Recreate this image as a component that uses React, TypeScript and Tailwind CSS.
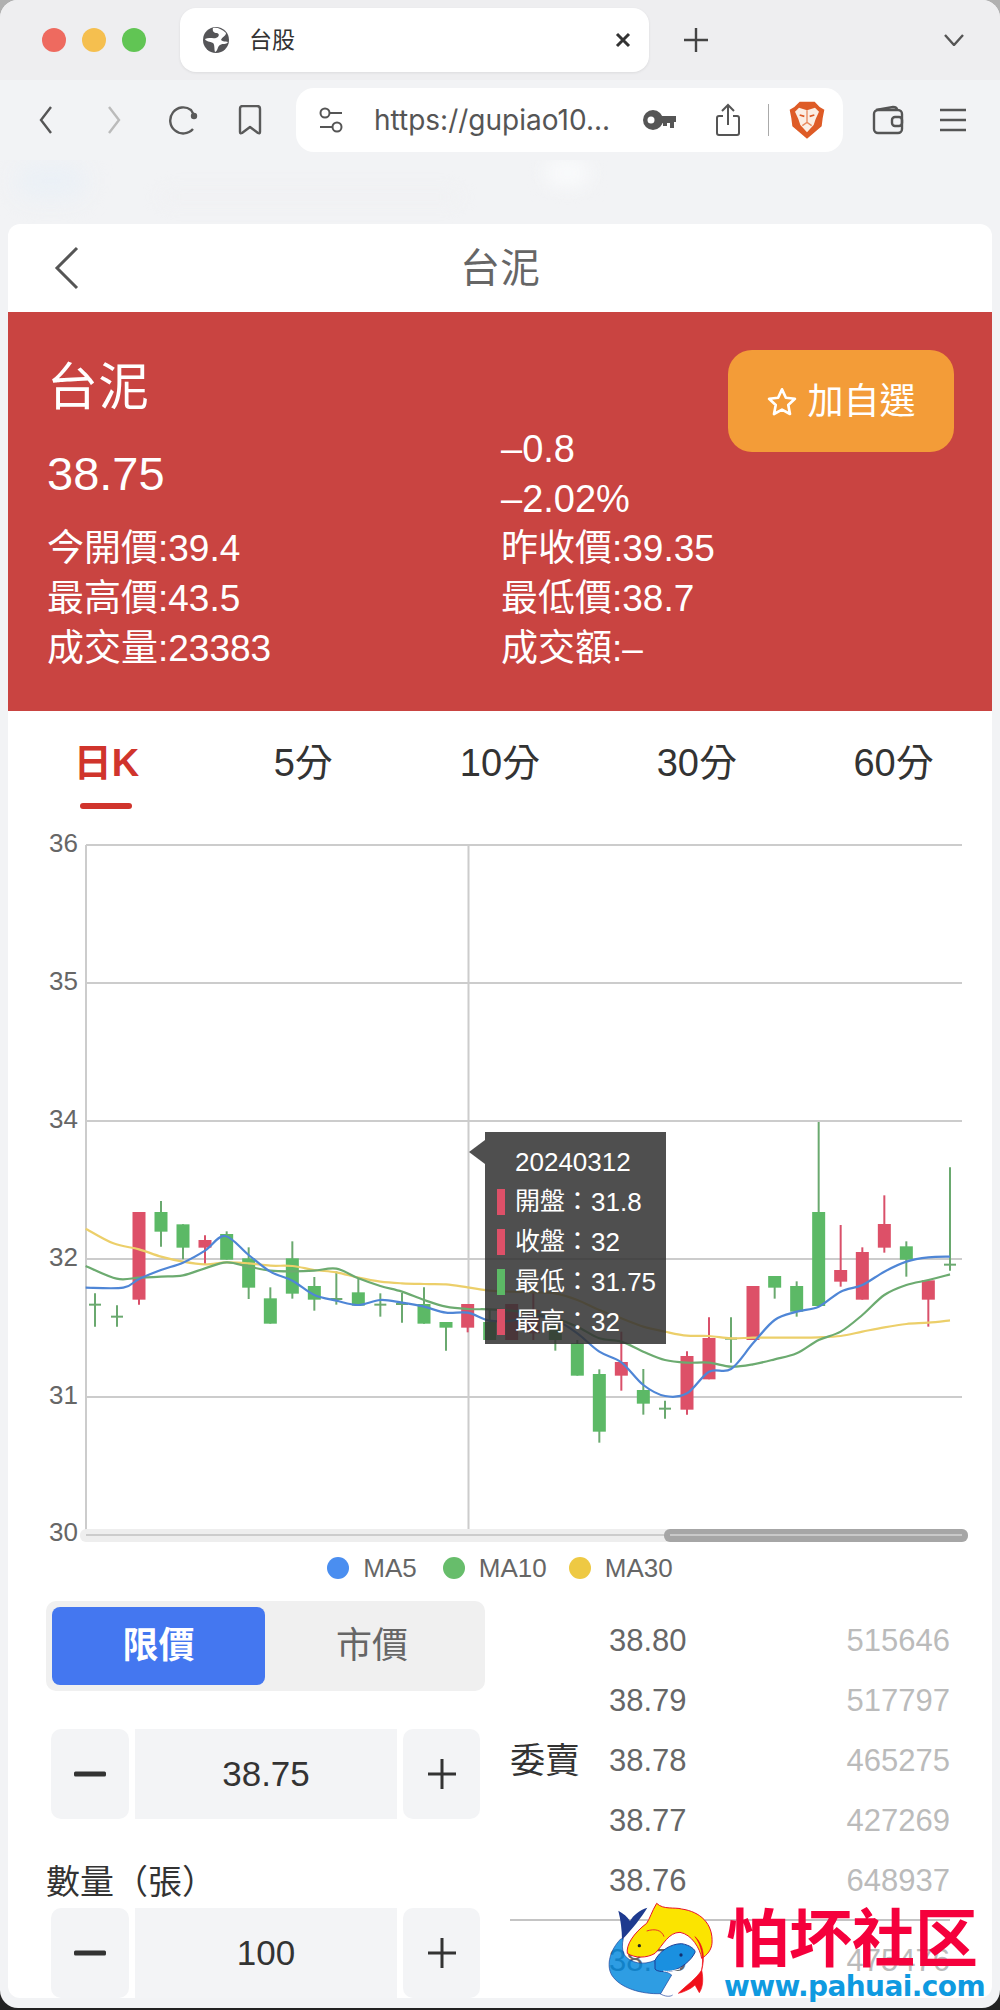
import React from "react";

const FONT = "font-['Liberation_Sans','Noto_Sans_CJK_TC',sans-serif]";

// [x, bodyTop, bodyBottom, wickTop, wickBottom, colour] with y read from a crop: page y = 1130 + v / 3
type C = [number, number, number, number, number, "r" | "g"];
const z3 = (x: number) => 50 + x / 3;
const z4 = (x: number) => 500 + x / 3;
const Y = (v: number) => 1130 + v / 3;

const candles: C[] = [
  [z3(135), 524, 524, 490, 590, "g"],
  [z3(201), 560, 560, 526, 590, "g"],
  [z3(267), 246, 509, 246, 524, "r"],
  [z3(333), 246, 305, 213, 350, "g"],
  [z3(399), 283, 353, 283, 388, "g"],
  [z3(465), 330, 353, 316, 404, "r"],
  [z3(530), 312, 389, 304, 389, "g"],
  [z3(596), 385, 473, 352, 507, "g"],
  [z3(661), 505, 581, 472, 581, "g"],
  [z3(727), 385, 491, 334, 506, "g"],
  [z3(793), 468, 509, 441, 542, "g"],
  [z3(859), 507, 507, 424, 524, "g"],
  [z3(925), 487, 527, 441, 527, "g"],
  [z3(991), 524, 524, 490, 560, "g"],
  [z3(1056), 522, 522, 489, 578, "g"],
  [z3(1122), 522, 581, 472, 581, "g"],
  [z3(1188), 576, 593, 576, 662, "g"],
  [z3(1253), 522, 593, 522, 607, "r"],
  [z3(1319), 576, 630, 540, 630, "g"],
  [z4(35), 522, 630, 522, 630, "r"],
  [z4(100), 540, 610, 488, 630, "r"],
  [z4(166), 585, 630, 570, 662, "g"],
  [z4(232), 640, 737, 630, 737, "g"],
  [z4(298), 732, 905, 718, 938, "g"],
  [z4(364), 696, 737, 605, 782, "r"],
  [z4(430), 780, 821, 717, 854, "g"],
  [z4(495), 836, 836, 812, 866, "g"],
  [z4(561), 678, 839, 664, 854, "r"],
  [z4(627), 624, 748, 562, 748, "r"],
  [z4(693), 626, 626, 562, 698, "g"],
  [z4(759), 468, 630, 468, 630, "r"],
  [z4(824), 438, 473, 438, 506, "g"],
  [z4(890), 468, 545, 454, 560, "g"],
  [z4(956), 246, 528, -24, 528, "g"],
  [z4(1022), 420, 455, 285, 470, "r"],
  [z4(1087), 366, 509, 352, 509, "r"],
  [z4(1153), 282, 353, 196, 368, "r"],
  [z4(1219), 349, 389, 334, 440, "g"],
  [z4(1285), 451, 509, 451, 590, "r"],
  [z4(1350), 404, 404, 112, 422, "g"],
];

const toPts = (a: number[][], b: number[][]) => [
  ...a.map(([x, y]) => [z3(x), Y(y)]),
  ...b.map(([x, y]) => [z4(x), Y(y)]),
];

const ma5 = toPts(
  [[107,473],[220,473],[267,447],[333,420],[399,398],[465,362],[525,318],[596,375],[661,425],[727,452],[793,495],[859,512],[925,525],[991,510],[1056,518],[1122,530],[1188,548],[1253,548],[1319,572]],
  [[35,572],[100,558],[166,570],[232,610],[298,665],[364,697],[430,765],[495,798],[561,790],[627,725],[693,717],[759,640],[824,570],[890,545],[956,530],[1022,485],[1087,465],[1153,425],[1219,395],[1285,382],[1350,380]]
);
const ma10 = toPts(
  [[107,408],[200,446],[267,443],[333,440],[399,436],[465,415],[530,397],[596,410],[661,422],[727,424],[793,422],[859,416],[925,445],[991,468],[1056,485],[1122,510],[1188,530],[1253,537],[1319,538]],
  [[35,542],[100,550],[166,565],[232,590],[298,625],[364,635],[430,665],[495,690],[561,698],[627,698],[693,710],[759,703],[824,688],[890,670],[956,630],[1022,605],[1087,555],[1153,495],[1219,465],[1285,450],[1350,433]]
);
const ma30 = toPts(
  [[107,296],[190,340],[267,358],[333,380],[399,395],[465,403],[530,397],[596,400],[661,407],[727,408],[793,420],[859,427],[925,443],[991,455],[1056,460],[1122,462],[1188,463],[1253,472],[1319,482]],
  [[35,485],[100,487],[166,490],[232,510],[298,540],[364,565],[430,590],[495,605],[561,617],[627,618],[693,625],[759,623],[824,623],[890,623],[956,622],[1022,618],[1087,605],[1153,592],[1219,582],[1285,578],[1350,571]]
);

function smooth(p: number[][]) {
  let d = `M${p[0][0]},${p[0][1]}`;
  for (let i = 0; i < p.length - 1; i++) {
    const a = p[Math.max(i - 1, 0)], b = p[i], c = p[i + 1], e = p[Math.min(i + 2, p.length - 1)];
    d += ` C${b[0] + (c[0] - a[0]) / 6},${b[1] + (c[1] - a[1]) / 6} ${c[0] - (e[0] - b[0]) / 6},${c[1] - (e[1] - b[1]) / 6} ${c[0]},${c[1]}`;
  }
  return d;
}

const gridY = [845, 983, 1121, 1259, 1397, 1534];
const labels = ["36", "35", "34", "32", "31", "30"];

function Chart() {
  return (
    <svg viewBox="8 815 984 733" width={984} height={733} className="block">
      {gridY.map((y, i) => (
        <React.Fragment key={y}>
          <line x1={86} x2={962} y1={y} y2={y} stroke="#cccccc" strokeWidth={2} />
          <text x={78} y={y + 7} textAnchor="end" className="text-[26px] fill-[#666666]">{labels[i]}</text>
        </React.Fragment>
      ))}
      <line x1={86} x2={86} y1={845} y2={1534} stroke="#cccccc" strokeWidth={2} />
      <line x1={468.5} x2={468.5} y1={845} y2={1534} stroke="#cccccc" strokeWidth={2} />
      {candles.map(([x, t, b, wt, wb, c], i) => {
        const fill = c === "r" ? "#dd5068" : "#5cb966";
        const wick = c === "r" ? "#d9506a" : "#6aa96f";
        return (
          <g key={i}>
            <line x1={x} x2={x} y1={Y(wt)} y2={Y(wb)} stroke={wick} strokeWidth={2} />
            {t === b ? (
              <line x1={x - 6} x2={x + 6} y1={Y(t)} y2={Y(t)} stroke={wick} strokeWidth={2} />
            ) : (
              <rect x={x - 6.5} y={Y(t)} width={13} height={(b - t) / 3} fill={fill} />
            )}
          </g>
        );
      })}
      <path d={smooth(ma30)} fill="none" stroke="#eccf6a" strokeWidth={2.2} />
      <path d={smooth(ma10)} fill="none" stroke="#6cab70" strokeWidth={2.2} />
      <path d={smooth(ma5)} fill="none" stroke="#4f86d6" strokeWidth={2.2} />
      <rect x={80} y={1529} width={888} height={13} rx={6} fill="#eeeeee" />
      <line x1={86} x2={664} y1={1535} y2={1535} stroke="#cccccc" strokeWidth={2} />
      <rect x={664} y={1529} width={304} height={13} rx={6} fill="#a6a6a6" />
      <line x1={670} x2={962} y1={1535} y2={1535} stroke="#c9c9c9" strokeWidth={2} />
    </svg>
  );
}

function Tooltip() {
  const rows: [string, string, string][] = [
    ["開盤：", "31.8", "bg-[#dd5068]"],
    ["收盤：", "32", "bg-[#dd5068]"],
    ["最低：", "31.75", "bg-[#5cb966]"],
    ["最高：", "32", "bg-[#dd5068]"],
  ];
  return (
    <div className="absolute left-[477px] top-[317px] w-[181px] h-[212px] bg-[rgba(50,50,50,0.86)] text-white text-[25px] pt-[10px]">
      <div className="absolute left-[-16px] top-[8px] w-0 h-0 border-y-[12px] border-y-transparent border-r-[16px] border-r-[rgba(50,50,50,0.86)]" />
      <div className="h-[40px] pl-[30px] flex items-center text-[26px]">20240312</div>
      {rows.map(([k, v, c]) => (
        <div key={k} className="h-[40px] flex items-center pl-[12px]">
          <span className={`w-[8px] h-[26px] ${c}`} />
          <span className="w-[76px] ml-[10px]">{k}</span>
          <span className="text-[26px]">{v}</span>
        </div>
      ))}
    </div>
  );
}

function Stepper({ value, className = "" }: { value: string; className?: string }) {
  return (
    <div className={`flex gap-[6px] w-[429px] h-[90px] ${className}`}>
      <div className="w-[78px] bg-[#f3f4f6] rounded-[10px] flex items-center justify-center">
        <svg width="32" height="6"><rect width="32" height="5" y="0.5" rx="1.5" fill="#333333" /></svg>
      </div>
      <div className="flex-1 bg-[#f3f4f6] flex items-center justify-center text-[35px] text-[#333333]">{value}</div>
      <div className="w-[77px] bg-[#f3f4f6] rounded-[10px] flex items-center justify-center">
        <svg width="28" height="30" fill="#333333"><rect x="0" y="13.5" width="28" height="3" /><rect x="12.5" y="0" width="3" height="30" /></svg>
      </div>
    </div>
  );
}

function Row({ p, v }: { p: string; v: string }) {
  return (
    <div className="h-[60px] flex items-center justify-between">
      <span className="text-[31px] text-[#666666]">{p}</span>
      <span className="text-[31px] text-[#bbbbbb]">{v}</span>
    </div>
  );
}

function Brave() {
  return (
    <svg width="36" height="38" viewBox="28 34 108 114">
      <path d="M60 36 H105 L120 52 L134 60 L129 86 L126 110 L82 147 L38 110 L35 86 L30 60 L44 52 Z" fill="#de5b26" />
      <path d="M58 54 L82 62 L106 54 L118 66 L108 88 L102 106 L82 128 L62 106 L56 88 L46 66 Z" fill="#fbeee4" />
      <path d="M60 76 L74 80 M104 76 L90 80" stroke="#de5b26" strokeWidth={5} />
      <path d="M82 62 V98 M68 108 L82 98 L96 108" fill="none" stroke="#e98a5e" strokeWidth={4} />
    </svg>
  );
}

function Fish() {
  return (
    <svg viewBox="0 0 360 330" width={120} height={110} className="absolute left-[592px] top-[294px]">
      {/* blue fish, its long body lets the row below show through */}
      <path d="M62 132 C30 165 18 210 35 240 C60 280 125 298 182 296 L215 240 C200 228 180 228 168 222 L165 196 C130 212 90 205 72 178 C66 165 66 148 70 130 Z" fill="#0088dd" fillOpacity={0.82} stroke="#1c3f98" strokeWidth={2} />
      <path d="M165 196 C178 170 210 146 245 146 C270 150 288 165 285 172 C275 195 245 220 215 228 C195 232 170 230 165 222 Z" fill="#1a90e0" stroke="#1c3f98" strokeWidth={3} />
      <path d="M190 228 C205 232 225 225 240 222" fill="none" stroke="#ffffff" strokeWidth={3} />
      <path d="M180 296 C195 305 210 306 218 300" fill="none" stroke="#1c3f98" strokeWidth={2} />
      {/* navy tail */}
      <path d="M66 134 C66 105 62 75 55 47 C70 55 82 65 90 78 C100 60 118 46 142 38 C128 62 95 105 66 134 Z" fill="#1e3a8f" />
      {/* yellow fish */}
      <path d="M170 25 C190 45 225 36 245 42 C300 50 340 85 336 145 C334 165 322 180 305 190 C300 160 275 118 240 112 C205 112 190 150 165 175 C140 190 105 190 82 175 C78 150 100 115 140 85 C150 70 155 50 170 25 Z" fill="#fbe400" stroke="#e8112d" strokeWidth={3} />
      <path d="M140 108 C165 100 185 105 192 125" fill="none" stroke="#e8112d" strokeWidth={2.5} />
      {/* red tail */}
      <path d="M285 125 C305 150 312 190 305 225 C290 250 260 270 235 295 C255 290 275 280 285 270 L298 293 C310 275 310 250 305 225 C315 190 312 150 285 125 Z" fill="#f0101a" stroke="#f0101a" strokeWidth={2} />
      <circle cx="118" cy="152" r="5" fill="#222222" />
      <circle cx="243" cy="180" r="5" fill="#123070" />
    </svg>
  );
}

export default function App() {
  return (
    <div className={`w-[1000px] h-[2010px] overflow-hidden relative bg-[linear-gradient(#b0b0b0_0%,#b0b0b0_50%,#222222_90%)] ${FONT}`}>
      <div className="h-[2008px] rounded-[18px] overflow-hidden bg-[#f2f3f5] flex flex-col">
        {/* Tab strip */}
        <div className="h-[80px] shrink-0 bg-[#eeeef0] flex items-start pt-[8px]">
          <div className="flex gap-[16px] ml-[42px] mt-[20px]">
            <span className="w-[24px] h-[24px] rounded-full bg-[#ee6a5f]" />
            <span className="w-[24px] h-[24px] rounded-full bg-[#f5bf4f]" />
            <span className="w-[24px] h-[24px] rounded-full bg-[#61c554]" />
          </div>
          <div className="ml-[34px] w-[469px] h-[64px] rounded-[16px] bg-white shadow-[0_1px_3px_rgba(0,0,0,0.08)] flex items-center pl-[23px] pr-[18px]">
            <svg width="26" height="26" viewBox="0 0 26 26">
              <circle cx="13" cy="13" r="13" fill="#555558" />
              <path d="M10 1 C9 4 11 6 14 6 C17 7 16 10 13 11 C10 12 6 10 2 12 C3 15 7 14 10 16 C12 18 11 22 12 25 C15 24 14 20 17 18 C20 16 23 18 25 15 C22 14 20 15 18 13 C19 10 23 9 23 6 C19 2 14 0 10 1 Z" fill="#ffffff" />
            </svg>
            <span className="ml-[20px] text-[23px] text-[#333333]">台股</span>
            <svg className="ml-auto" width="16" height="16" viewBox="0 0 16 16" stroke="#333333" strokeWidth={3}>
              <path d="M2 2 L14 14 M14 2 L2 14" />
            </svg>
          </div>
          <svg className="ml-[35px] mt-[20px]" width="24" height="24" stroke="#444444" strokeWidth={2.4}>
            <path d="M12 0 V24 M0 12 H24" />
          </svg>
          <svg className="ml-[236px] mt-[26px]" width="20" height="12" fill="none" stroke="#555555" strokeWidth={2.4}>
            <path d="M1 1 L10 11 L19 1" />
          </svg>
        </div>
        {/* Navigation */}
        <div className="h-[80px] shrink-0 pt-[8px] flex items-start">
          <div className="ml-[29px] flex gap-[34px] h-[64px] items-center">
            <svg width="34" height="28" fill="none" stroke="#555555" strokeWidth={2.4}><path d="M22 1 L12 14 L22 27" /></svg>
            <svg width="34" height="28" fill="none" stroke="#bbbbbb" strokeWidth={2.4}><path d="M12 1 L22 14 L12 27" /></svg>
            <svg width="34" height="30" viewBox="0 0 34 30" fill="none" stroke="#5a5a5a" strokeWidth={2.4}>
              <path d="M29 10 L26 5 A13 13 0 1 0 28 24" />
              <circle cx="29" cy="11" r="3.2" fill="#5a5a5a" stroke="none" />
            </svg>
            <svg width="34" height="30" fill="none" stroke="#5a5a5a" strokeWidth={2.4} strokeLinejoin="round">
              <path d="M7 4 Q7 1 10 1 H24 Q27 1 27 4 V27 Q27 29 25 28 L17 22 L9 28 Q7 29 7 27 Z" />
            </svg>
          </div>
          <div className="ml-[29px] w-[547px] h-[64px] rounded-[18px] bg-white flex items-center pl-[19px]">
            <svg width="32" height="28" fill="none" stroke="#555555" strokeWidth={2}>
              <circle cx="10" cy="7" r="4.5" /><path d="M15 7 H27" />
              <circle cx="22" cy="21" r="4.5" /><path d="M5 21 H17" />
            </svg>
            <span className="ml-[27px] w-[238px] text-[28px] text-[#555555] whitespace-nowrap font-['Inter','Liberation_Sans',sans-serif]">https://gupiao10...</span>
            <svg className="ml-[31px]" width="34" height="22" viewBox="0 0 34 22">
              <circle cx="10" cy="11" r="10" fill="#555555" /><circle cx="8" cy="11" r="3.5" fill="#ffffff" />
              <path d="M18 7 H33 V13 H31 V19 H27 V14 H24 V17 H20 V14 H18 Z" fill="#555555" />
            </svg>
            <svg className="ml-[34px]" width="34" height="34" fill="none" stroke="#555555" strokeWidth={2}>
              <path d="M12 13 H8 Q6 13 6 15 V30 Q6 32 8 32 H26 Q28 32 28 30 V15 Q28 13 26 13 H22" />
              <path d="M17 22 V2 M11 8 L17 2 L23 8" />
            </svg>
            <span className="ml-[23px] w-[1px] h-[32px] bg-[#aaaaaa]" />
            <span className="ml-[20px] flex"><Brave /></span>
          </div>
          <div className="ml-[28px] flex gap-[31px] h-[64px] items-center">
            <svg width="34" height="30" fill="none" stroke="#555555" strokeWidth={2.4}>
              <rect x="3" y="5" width="28" height="23" rx="4" />
              <path d="M5 5 L22 2 Q26 2 26 5" />
              <rect x="21" y="12" width="10" height="9" rx="3" />
            </svg>
            <svg width="34" height="26" stroke="#555555" strokeWidth={2.4}>
              <path d="M4 3 H30 M4 13 H30 M4 23 H30" />
            </svg>
          </div>
        </div>
        {/* Frosted backdrop behind the page */}
        <div className="h-[64px] shrink-0 relative overflow-hidden">
          <div className="absolute left-[16px] top-[4px] w-[70px] h-[34px] rounded-full bg-[#eaf0f6] blur-[12px]" />
          <div className="absolute left-[545px] top-[0px] w-[45px] h-[26px] rounded-full bg-[#fafbfc] blur-[10px]" />
          <div className="absolute left-[160px] top-[30px] w-[300px] h-[14px] rounded-full bg-[#f0f1f3] blur-[8px]" />
        </div>
        {/* Page card */}
        <div className="mx-[8px] h-[1774px] shrink-0 rounded-[12px] overflow-hidden bg-white">
          <div className="h-[88px] grid grid-cols-[1fr_auto_1fr] items-center">
            <svg className="ml-[46px]" width="26" height="44" fill="none" stroke="#555555" strokeWidth={3}>
              <path d="M23 2 L3 22 L23 42" />
            </svg>
            <div className="text-[40px] text-[#666666]">台泥</div>
            <div />
          </div>
          {/* Quote */}
          <div className="h-[399px] bg-[#c94441] text-white pl-[39px] pr-[38px] pt-[38px] flex justify-between items-start">
            <div className="pt-[13px] w-[680px]">
              <div className="h-[50px] flex items-center text-[51px]">台泥</div>
              <div className="mt-[11px] flex">
                <div className="w-[454px] h-[100px] flex items-center text-[47px]">38.75</div>
                <div className="text-[38px]">
                  <div className="h-[50px] flex items-center">–0.8</div>
                  <div className="h-[50px] flex items-center">–2.02%</div>
                </div>
              </div>
              <div className="grid grid-cols-[454px_1fr] text-[37px]">
                {["今開價:39.4", "昨收價:39.35", "最高價:43.5", "最低價:38.7", "成交量:23383", "成交額:–"].map((t) => (
                  <div key={t} className="h-[50px] flex items-center">{t}</div>
                ))}
              </div>
            </div>
            <div className="w-[226px] h-[102px] rounded-[24px] bg-[#f39c38] flex items-center justify-center gap-[9px] text-[36px] pt-[1px]">
              <svg width="32" height="32" viewBox="0 0 24 24" fill="none" stroke="#ffffff" strokeWidth={2} strokeLinejoin="round">
                <path d="M12 2.5 L14.9 8.8 L21.7 9.6 L16.7 14.3 L18 21 L12 17.7 L6 21 L7.3 14.3 L2.3 9.6 L9.1 8.8 Z" />
              </svg>
              <span>加自選</span>
            </div>
          </div>
          {/* Periods */}
          <div className="grid grid-cols-5 h-[104px] text-[38px] text-[#333333]">
            <div className="relative flex justify-center pt-[30px] leading-[44px] text-[#d0342c] font-bold">
              日K
              <span className="absolute left-[72px] w-[52px] top-[92px] h-[6px] rounded-full bg-[#d0342c]" />
            </div>
            {["5分", "10分", "30分", "60分"].map((t) => (
              <div key={t} className="flex justify-center pt-[30px] leading-[44px]">{t}</div>
            ))}
          </div>
          {/* Chart */}
          <div className="relative h-[733px]">
            <Chart />
            <Tooltip />
          </div>
          {/* Legend */}
          <div className="h-[40px] flex items-center justify-center text-[26px] text-[#666666]">
            <span className="w-[22px] h-[22px] rounded-full bg-[#4a8ef0]" />
            <span className="ml-[14px]">MA5</span>
            <span className="ml-[26px] w-[22px] h-[22px] rounded-full bg-[#67bd6b]" />
            <span className="ml-[14px]">MA10</span>
            <span className="ml-[22px] w-[22px] h-[22px] rounded-full bg-[#eec943]" />
            <span className="ml-[14px]">MA30</span>
          </div>
          {/* Trade */}
          <div className="mt-[13px] flex items-start pl-[38px] relative">
            <div className="w-[439px] shrink-0">
              <div className="h-[90px] rounded-[10px] bg-[#f0f0f0] p-[6px] flex text-[36px]">
                <div className="w-[213px] rounded-[8px] bg-[#4477f0] text-white font-bold flex items-center justify-center">限價</div>
                <div className="flex-1 text-[#666666] flex items-center justify-center">市價</div>
              </div>
              <Stepper value="38.75" className="mt-[38px] ml-[5px]" />
              <div className="mt-[40px] h-[46px] flex items-center text-[34px] text-[#333333] whitespace-nowrap">數量（張）</div>
              <Stepper value="100" className="mt-[3px] ml-[5px]" />
            </div>
            <div className="ml-[25px] w-[440px] pt-[10px]">
              <div className="flex items-center">
                <div className="w-[99px] text-[35px] text-[#333333]">委賣</div>
                <div className="flex-1">
                  <Row p="38.80" v="515646" />
                  <Row p="38.79" v="517797" />
                  <Row p="38.78" v="465275" />
                  <Row p="38.77" v="427269" />
                  <Row p="38.76" v="648937" />
                </div>
              </div>
              <div className="mt-[8px] h-[2px] bg-[#c4c4c4]" />
              <div className="mt-[10px] pl-[99px]">
                <Row p="38.75" v="475476" />
              </div>
            </div>
            {/* Watermark */}
            <Fish />
          </div>
        </div>
      </div>
      <div className="absolute left-[726px] top-[1899px] text-[63px] leading-[70px] font-bold text-[#f5003c] whitespace-nowrap font-['Noto_Sans_CJK_SC',sans-serif]">怕坏社区</div>
      <div className="absolute left-[724px] top-[1970px] text-[28px] leading-[34px] font-bold text-[#0f9ae0] whitespace-nowrap tracking-[-0.6px] font-['DejaVu_Sans',sans-serif]">www.pahuai.com</div>
    </div>
  );
}
